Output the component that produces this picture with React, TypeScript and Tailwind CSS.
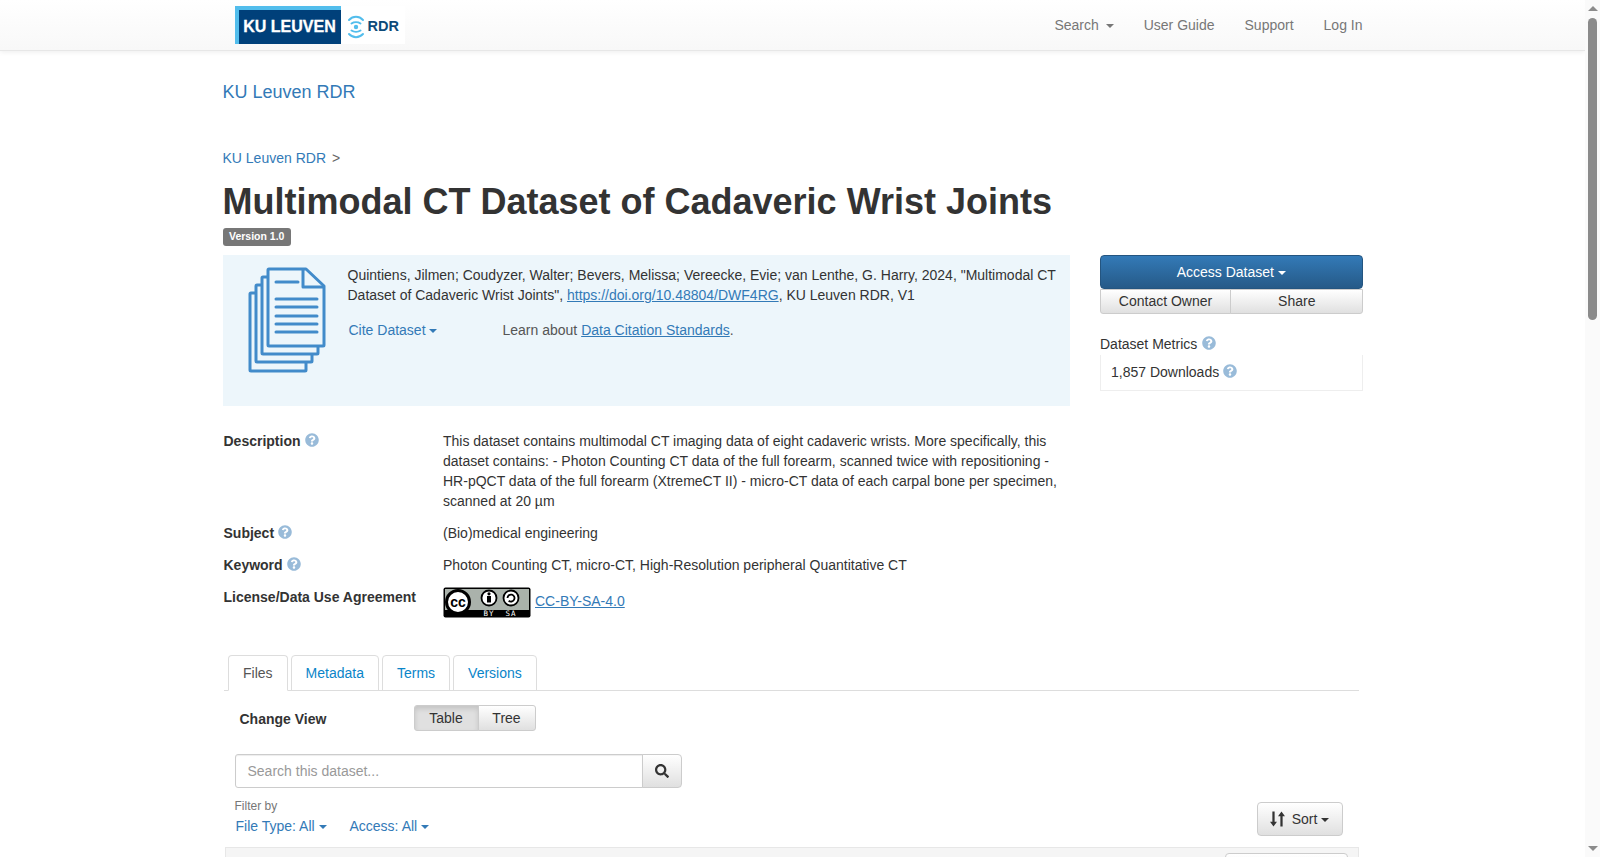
import React from "react";
import { FaQuestionCircle, FaSearch } from "react-icons/fa";

const Caret = ({ className = "" }: { className?: string }) => (
  <span className={`inline-block w-0 h-0 ml-0 align-middle border-t-[4px] border-x-[4px] border-x-transparent border-t-current ${className}`} />
);

const Q = ({ className = "" }: { className?: string }) => (
  <FaQuestionCircle className={`inline-block text-[14px] text-[#99bbd9] align-[-1px] ${className}`} />
);

const Logo = () => (
  <div className="flex h-[38px] w-[170px] mt-[6px] bg-white">
    <div className="w-[106px] h-[38px] bg-[#00407a] border-l-[4px] border-t-[4px] border-[#52bdec] flex items-center justify-center">
      <span className="text-white font-bold text-[16px] leading-none [-webkit-text-stroke:0.3px_white]">KU LEUVEN</span>
    </div>
    <div className="flex items-center pl-[6px] gap-[3px] pt-[3px]">
      <svg width="18" height="24" viewBox="0 0 18 24" fill="none" stroke="#52bdec" strokeWidth="2" strokeLinecap="round">
        <path d="M2 5 C6 0.8 12 0.8 16 5" />
        <path d="M4.5 8.5 C7 6.8 11 6.8 13.5 8.5" />
        <circle cx="9" cy="12" r="2.2" fill="#52bdec" stroke="none" />
        <path d="M4.5 15.5 C7 17.2 11 17.2 13.5 15.5" />
        <path d="M2 19 C6 23.2 12 23.2 16 19" />
      </svg>
      <span className="text-[#0d4a78] font-bold text-[14.5px] leading-none">RDR</span>
    </div>
  </div>
);

const DocIcon = () => (
  <svg width="80" height="108" viewBox="0 0 80 108" fill="none" stroke="#428bca" strokeWidth="3" strokeLinejoin="round" className="block">
    <path d="M21 2 H58 L76 19 V78 a1 1 0 0 1 -1 1 H21 a1 1 0 0 1 -1 -1 V3 a1 1 0 0 1 1 -1 Z" />
    <path d="M20 10 H15 a1 1 0 0 0 -1 1 V86 a1 1 0 0 0 1 1 H69 a1 1 0 0 0 1 -1 V79" />
    <path d="M14 18 H9 a1 1 0 0 0 -1 1 V94 a1 1 0 0 0 1 1 H63 a1 1 0 0 0 1 -1 V87" />
    <path d="M8 26 H3 a1 1 0 0 0 -1 1 V103 a1 1 0 0 0 1 1 H57 a1 1 0 0 0 1 -1 V95" />
    <path d="M55 3 V20 H76" />
    <path d="M28 15 H50 M28 32 H69 M28 40 H69 M28 49 H69 M28 57 H69 M28 65 H69" strokeLinecap="round" />
  </svg>
);

const CCBadge = () => (
  <svg width="88" height="31" viewBox="0 0 88 31" className="inline-block align-middle">
    <rect x="0.5" y="0.5" width="87" height="30" rx="2" fill="#000" />
    <rect x="2" y="2" width="84" height="21" fill="#aab2ab" />
    <circle cx="15" cy="15" r="11.5" fill="#fff" stroke="#000" strokeWidth="3" />
    <text x="15" y="19.5" textAnchor="middle" fontFamily="Liberation Sans" fontWeight="700" fontSize="14" fill="#000">cc</text>
    <circle cx="46" cy="11" r="7.5" fill="#fff" stroke="#000" strokeWidth="1.8" />
    <circle cx="46" cy="6.8" r="1.6" fill="#000" />
    <rect x="44" y="9" width="4" height="6.5" fill="#000" />
    <circle cx="68" cy="11" r="7.5" fill="#fff" stroke="#000" strokeWidth="1.8" />
    <path d="M64.5 11 a3.5 3.5 0 1 1 1.2 2.7" fill="none" stroke="#000" strokeWidth="1.8" />
    <text x="46" y="29" textAnchor="middle" fontFamily="DejaVu Sans Mono" fontSize="7.5" letterSpacing="1" fill="#fff">BY</text>
    <text x="68" y="29" textAnchor="middle" fontFamily="DejaVu Sans Mono" fontSize="7.5" letterSpacing="1" fill="#fff">SA</text>
  </svg>
);

const SortIcon = () => (
  <svg width="15" height="16" viewBox="0 0 14 15" fill="#333" className="inline-block">
    <path d="M2.2 0.5 H4.3 V10 H6.5 L3.25 14.5 L0 10 H2.2 Z" />
    <path d="M9.7 14.5 H11.8 V5 H14 L10.75 0.5 L7.5 5 H9.7 Z" />
  </svg>
);

const btn = "border border-[#ccc] bg-gradient-to-b from-white to-[#e0e0e0] text-[#333] text-[14px] leading-[20px] shadow-[0_1px_0_rgba(255,255,255,.15)]";

const Row = ({ label, q = true, children, className = "" }: { label: string; q?: boolean; children: React.ReactNode; className?: string }) => (
  <div className={`flex text-[14px] leading-[20px] ${className}`}>
    <div className="w-[220.5px] pl-px font-bold text-[#333]">
      {label}
      {q && <Q className="ml-[4px]" />}
    </div>
    <div className="flex-1 text-[#333]">{children}</div>
  </div>
);

const Tab = ({ children, active = false }: { children: React.ReactNode; active?: boolean }) => (
  <div
    className={`h-[36px] flex items-center rounded-t-[4px] border border-[#ddd] mr-[3px] text-[14px] -mb-px ${
      active ? "pl-[14px] pr-[14px] border-b-white bg-white text-[#555]" : "px-[14px] text-[#0a85c9]"
    }`}
  >
    {children}
  </div>
);

const Scrollbar = () => (
  <div className="w-[15px] h-[857px] shrink-0 bg-[#fafafa] flex flex-col items-center">
    <div className="mt-[6px] w-0 h-0 border-b-[5px] border-x-[5px] border-x-transparent border-b-[#8b8b8b]" />
    <div className="mt-[7px] w-[9px] h-[302px] rounded-full bg-[#8b8b8b]" />
    <div className="mt-auto mb-[6px] w-0 h-0 border-t-[5px] border-x-[5px] border-x-transparent border-t-[#8b8b8b]" />
  </div>
);

export default function App() {
  return (
    <div className="flex h-[857px] overflow-hidden bg-white font-['Liberation_Sans',Arial,sans-serif] text-[14px] leading-[20px] text-[#333]">
      <div className="flex-1 min-w-0">
        <nav className="h-[51px] bg-gradient-to-b from-white to-[#f8f8f8] border-b border-[#e7e7e7] shadow-[0_1px_5px_rgba(0,0,0,.075)]">
          <div className="w-[1170px] mx-auto px-[15px] flex justify-between">
            <div className="ml-[12px]">
              <Logo />
            </div>
            <div className="flex items-center h-[50px] text-[#777] gap-[30px]">
              <span>
                Search <Caret className="ml-[3px]" />
              </span>
              <span>User Guide</span>
              <span>Support</span>
              <span>Log In</span>
            </div>
          </div>
        </nav>

        <main className="w-[1170px] mx-auto px-[15px]">
          <div className="pt-[31px] h-[83px] text-[18px] leading-[20px] text-[#337ab7]">KU Leuven RDR</div>
          <div className="mt-[14px] h-[20px] text-[#337ab7]">
            KU Leuven RDR <span className="text-[#666] ml-[2px]">&gt;</span>
          </div>
          <h1 className="mt-[14px] text-[36px] leading-[40px] font-bold text-[#333]">
            Multimodal CT Dataset of Cadaveric Wrist Joints
          </h1>
          <div className="mt-[6px] inline-block h-[18px] rounded-[3px] bg-[#777] px-[6.5px] text-[10.5px] leading-[17px] font-bold text-white align-top">
            Version 1.0
          </div>

          <div className="mt-[9px] flex">
            <div className="w-[847.5px]">
              <div className="h-[151px] bg-[#edf6fb] flex">
                <div className="w-[125px] pl-[25px] pt-[12px] shrink-0">
                  <DocIcon />
                </div>
                <div className="flex-1 pt-[10px] pr-[10px]">
                  <div>
                    Quintiens, Jilmen; Coudyzer, Walter; Bevers, Melissa; Vereecke, Evie; van Lenthe, G. Harry, 2024, "Multimodal CT Dataset of Cadaveric Wrist Joints",{" "}
                    <a className="text-[#337ab7] underline">https://doi.org/10.48804/DWF4RG</a>, KU Leuven RDR, V1
                  </div>
                  <div className="mt-[15px] flex text-[#555]">
                    <span className="text-[#337ab7] ml-px w-[154px]">
                      Cite Dataset <Caret />
                    </span>
                    <span>
                      Learn about <a className="text-[#337ab7] underline">Data Citation Standards</a>.
                    </span>
                  </div>
                </div>
              </div>

              <div className="mt-[25px] flex flex-col">
                <Row label="Description">
                  This dataset contains multimodal CT imaging data of eight cadaveric wrists. More specifically, this dataset contains: - Photon Counting CT data of the full forearm, scanned twice with repositioning - HR-pQCT data of the full forearm (XtremeCT II) - micro-CT data of each carpal bone per specimen, scanned at 20 µm
                </Row>
                <Row label="Subject" className="mt-[12px]">(Bio)medical engineering</Row>
                <Row label="Keyword" className="mt-[12px]">Photon Counting CT, micro-CT, High-Resolution peripheral Quantitative CT</Row>
                <Row label="License/Data Use Agreement" q={false} className="mt-[12px]">
                  <span className="inline-flex items-center gap-[4px]">
                    <CCBadge />
                    <a className="text-[#337ab7] underline mb-[4px]">CC-BY-SA-4.0</a>
                  </span>
                </Row>
              </div>
            </div>

            <div className="ml-[30px] w-[262.5px]">
              <div className="h-[34px] rounded-[4px] border border-[#245580] bg-gradient-to-b from-[#337ab7] to-[#265a88] text-white flex items-center justify-center">
                <span>
                  Access Dataset <Caret />
                </span>
              </div>
              <div className="flex h-[25px]">
                <div className={`w-[131px] pb-[2px] flex items-center justify-center rounded-bl-[3px] ${btn}`}>Contact Owner</div>
                <div className={`flex-1 -ml-px pb-[2px] pl-px flex items-center justify-center rounded-br-[3px] ${btn}`}>Share</div>
              </div>
              <div className="mt-[20px] text-[#333]">
                Dataset Metrics <Q className="ml-[1px]" />
              </div>
              <div className="mt-[1px] h-[36px] border-x border-b border-[#eee] pl-[10px] pt-[7px]">
                1,857 Downloads <Q />
              </div>
            </div>
          </div>

          <div className="mt-[32px] w-[1135px] ml-px">
            <div className="flex border-b border-[#ddd] pl-[4.5px]">
              <Tab active>Files</Tab>
              <Tab>Metadata</Tab>
              <Tab>Terms</Tab>
              <Tab>Versions</Tab>
            </div>
            <div className="mt-[14px] flex items-center h-[26px]">
              <div className="pl-[16px] pt-[2px] w-[190px] font-bold">Change View</div>
              <div className="flex">
                <div className="h-[26px] w-[65px] flex items-center justify-center rounded-l-[3px] border border-[#ccc] bg-[#e0e0e0] shadow-[inset_0_3px_5px_rgba(0,0,0,.125)] text-[#333]">Table</div>
                <div className={`h-[26px] w-[58px] -ml-px flex items-center justify-center rounded-r-[3px] ${btn}`}>Tree</div>
              </div>
            </div>
            <div className="mt-[23px] ml-[11px] flex w-[447px] h-[34px]">
              <div className="flex-1 border border-[#ccc] shadow-[inset_0_1px_1px_rgba(0,0,0,.075)] rounded-l-[3px] pl-[12px] flex items-center text-[#999]">
                Search this dataset...
              </div>
              <div className={`w-[40px] -ml-px rounded-r-[4px] flex items-center justify-center ${btn}`}>
                <FaSearch className="text-[14px] text-[#333]" />
              </div>
            </div>
            <div className="mt-[10px] ml-[11px] flex justify-between">
              <div>
                <div className="text-[12px] leading-[17px] text-[#777]">Filter by</div>
                <div className="mt-[1px] flex text-[#337ab7] pl-px">
                  <span className="w-[114px]">File Type: All <Caret /></span>
                  <span>Access: All <Caret /></span>
                </div>
              </div>
              <div className={`mt-[4px] mr-[16px] h-[34px] w-[86px] rounded-[4px] flex items-center justify-center gap-[7px] ${btn}`}>
                <SortIcon />
                <span>Sort <Caret /></span>
              </div>
            </div>
            <div className="mt-[11px] ml-px h-[60px] bg-[#f5f5f5] border border-[#e7e7e7] flex justify-end pr-[10px] pt-[5px]">
              <div className={`h-[34px] w-[123px] rounded-[4px] ${btn}`} />
            </div>
          </div>
        </main>
      </div>
      <Scrollbar />
    </div>
  );
}
